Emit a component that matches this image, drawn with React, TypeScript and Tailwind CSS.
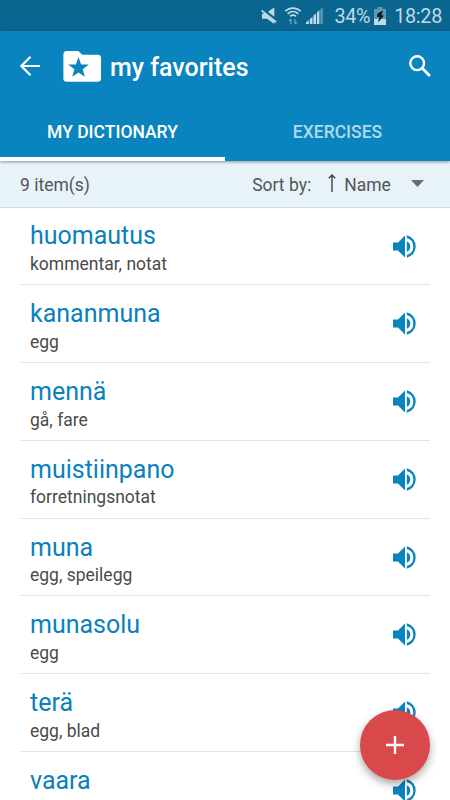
import React from "react";

interface Entry {
  word: string;
  translation?: string;
}

const entries: Entry[] = [
  { word: "huomautus", translation: "kommentar, notat" },
  { word: "kananmuna", translation: "egg" },
  { word: "mennä", translation: "gå, fare" },
  { word: "muistiinpano", translation: "forretningsnotat" },
  { word: "muna", translation: "egg, speilegg" },
  { word: "munasolu", translation: "egg" },
  { word: "terä", translation: "egg, blad" },
  { word: "vaara" },
];

const SpeakerIcon = () => (
  <svg width="23" height="23" viewBox="0 0 23 23" fill="#0a84be" className="mt-[27px] shrink-0">
    <path d="M0 7.5h5L12 .5v22l-7-7H0z" />
    <path d="M13.8 6.2a5.8 5.8 0 0 1 0 10.6z" />
    <path d="M13.8 .3a11.5 11.5 0 0 1 0 22.4v-2.7a8.8 8.8 0 0 0 0-17z" />
  </svg>
);

const StatusBar = () => (
  <div className="h-[31px] bg-[#0a658f] text-[#bfdae7] flex items-center justify-end pr-2">
    {/* Muted */}
    <svg width="18" height="18" viewBox="0 0 18 18" fill="currentColor" className="shrink-0">
      <path d="M8 4.8L14.3 .5v9.2z" />
      <path d="M2 6.4h3.5L14.3 13.5V17L7 11.8H2z" />
      <path d="M1.5 3.4L16.3 15.2" stroke="currentColor" strokeWidth="1.7" />
    </svg>
    {/* Wifi */}
    <svg width="18" height="20" viewBox="0 0 18 20" fill="none" stroke="currentColor" strokeWidth="1.7" className="ml-[6px] shrink-0">
      <path d="M1.2 5.2c4.6-4.2 11-4.2 15.6 0" />
      <path d="M3.6 7.8c3.2-2.8 7.6-2.8 10.8 0" />
      <path d="M6 10.3c1.8-1.5 4.2-1.5 6 0" />
      <path d="M7 18v-5M5 15l2-2M11 13v5M13 16l-2 2" strokeWidth="1.4" opacity=".5" />
    </svg>
    {/* Signal */}
    <svg width="17" height="17" viewBox="0 0 17 17" fill="currentColor" className="ml-[4px] shrink-0">
      <path d="M0 15.5l2.8-2.4V17H0zM3.8 12.2l2.7-2.5V17H3.8zM7.4 8.8l2.7-2.6V17H7.4z" />
      <path d="M11 5.4l2.4-2.3V17H11z" />
      <path d="M14.2 2.3L17 0v17h-2.8z" opacity=".4" />
    </svg>
    <span className="ml-[11px] pt-[2px] text-[19.8px] leading-[31px] tracking-[-0.3px]">34%</span>
    {/* Battery */}
    <svg width="12" height="18" viewBox="0 0 12 18" className="ml-[4px] shrink-0">
      <path d="M3.5 0h5v2H12v16H0V2h3.5z" fill="currentColor" opacity=".45" />
      <path d="M0 12h12v6H0z" fill="currentColor" />
      <path d="M9 3.5L3.5 6.5 3 10h2.5L4 15.5 10 8.5H7.5z" fill="#101b20" />
    </svg>
    <span className="ml-[8px] pt-[2px] text-[19.8px] leading-[31px] tracking-[-0.3px]">18:28</span>
  </div>
);

const AppBar = () => (
  <header className="relative z-10 h-[130px] bg-[#0a84be] text-white flex flex-col shadow-[0_1px_3px_rgba(0,0,0,0.4)]">
    <div className="h-[72px] flex items-center pl-5 pr-[19px]">
      <svg width="20" height="20" viewBox="0 0 20 20" fill="none" stroke="currentColor" strokeWidth="2.2" className="-mt-[2px]">
        <path d="M20 10H1.5M10.5 .8L1.4 10l9.1 9.2" />
      </svg>
      <svg width="38" height="31" viewBox="0 0 38 31" className="ml-[23px] -mt-[1px]">
        <path d="M3.5 0h11.8l4 3.8H34.8a3.3 3.3 0 0 1 3.2 3.3V27.4a3.3 3.3 0 0 1-3.2 3.3H3.7A3.3 3.3 0 0 1 .4 27.4V3.3A3.3 3.3 0 0 1 3.5 0z" fill="#fff" />
        <path d="M15.5 6l2.6 7.5 7.7.1-6.1 4.7 2.2 7.4-6.4-4.3-6.3 4.3 2.2-7.4L5.2 13.6l7.7-.1z" fill="#0a84be" />
      </svg>
      <h1 className="ml-[9px] pt-[2px] text-[25px] leading-[30px] font-medium">my favorites</h1>
      <svg width="22" height="22" viewBox="0 0 22 22" fill="none" stroke="currentColor" className="ml-auto -mt-[2px]">
        <circle cx="8.2" cy="8.2" r="6.9" strokeWidth="2.4" />
        <path d="M13.6 13.6l7.3 7.3" strokeWidth="2.8" />
      </svg>
    </div>
    <div className="flex-1 flex text-[17.5px] font-medium">
      <button className="w-1/2 border-b-4 border-white pt-[4px]">MY DICTIONARY</button>
      <button className="w-1/2 border-b-4 border-transparent pt-[4px] text-[#b2d8ea]">EXERCISES</button>
    </div>
  </header>
);

const SortBar = () => (
  <div className="h-[46.5px] bg-[#e7f2f9] border-b border-[#d2dce3] text-[#555] text-[17.5px] flex items-center px-5">
    <span className="pt-[2px]">9 item(s)</span>
    <span className="ml-auto pt-[2px]">Sort by:</span>
    <svg width="8" height="18" viewBox="0 0 8 18" fill="none" stroke="#444" strokeWidth="1.4" className="ml-[17px] -mt-[2px]">
      <path d="M4 18V1.5M.8 4.2L4 1l3.2 3.2" />
    </svg>
    <span className="ml-[8px] pt-[2px]">Name</span>
    <svg width="13" height="7" viewBox="0 0 13 7" fill="#666c70" className="ml-[20px] mr-[6.2px] -mt-[1px]">
      <path d="M0 0h13L6.5 7z" />
    </svg>
  </div>
);

const EntryRow: React.FC<Entry> = ({ word, translation }) => (
  <li className="h-[77.8px] shrink-0 mx-5 pl-[10px] pr-[14px] border-b border-[#e4e4e4] flex items-start justify-between">
    <div className="pt-[13.9px]">
      <div className="text-[25px] leading-[30px] text-[#0a80bc]">{word}</div>
      {translation && (
        <div className="mt-[0.6px] text-[17.5px] leading-[24px] text-[#4a4a4a]">{translation}</div>
      )}
    </div>
    <SpeakerIcon />
  </li>
);

export default function App() {
  return (
    <div className="relative w-[450px] h-[800px] overflow-hidden bg-white font-['Roboto',sans-serif] flex flex-col">
      <StatusBar />
      <AppBar />
      <SortBar />
      <ul className="flex-1 min-h-0 overflow-hidden flex flex-col">
        {entries.map((entry) => (
          <EntryRow key={entry.word} word={entry.word} translation={entry.translation} />
        ))}
      </ul>
      <button className="absolute right-5 bottom-5 size-[70px] rounded-full bg-[#d9494c] flex items-center justify-center shadow-[0_4px_8px_rgba(0,0,0,0.35)]">
        <svg width="18" height="18" viewBox="0 0 18 18" fill="none" stroke="#fff" strokeWidth="2.4">
          <path d="M9 0v18M0 9h18" />
        </svg>
      </button>
    </div>
  );
}
